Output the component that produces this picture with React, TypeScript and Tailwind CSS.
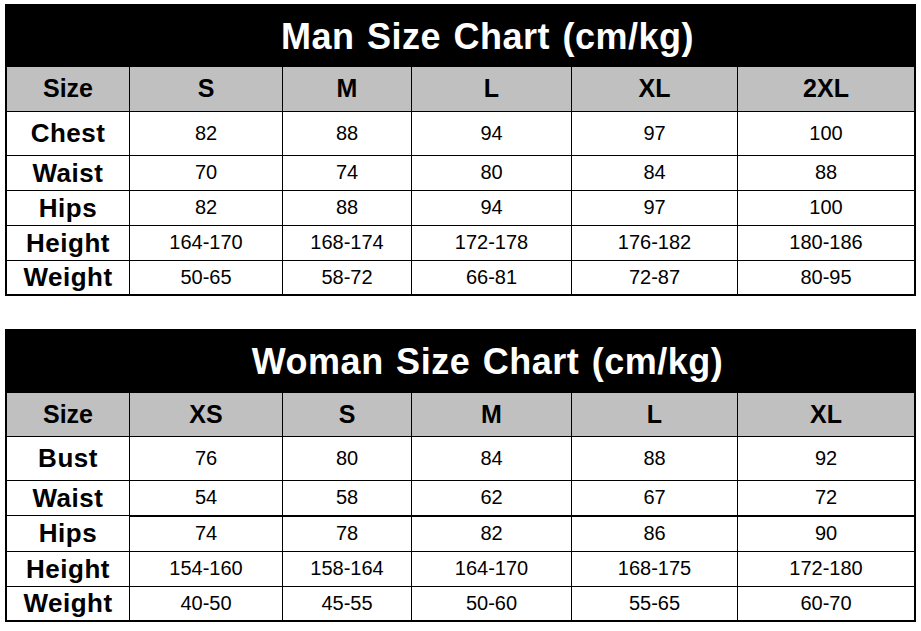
import React from 'react';

type Row = { label: string; values: string[]; h: string; thick?: boolean };

const manRows: Row[] = [
  { label: 'Chest', values: ['82', '88', '94', '97', '100'], h: 'h-[44px]' },
  { label: 'Waist', values: ['70', '74', '80', '84', '88'], h: 'h-[35px]' },
  { label: 'Hips', values: ['82', '88', '94', '97', '100'], h: 'h-[35px]' },
  { label: 'Height', values: ['164-170', '168-174', '172-178', '176-182', '180-186'], h: 'h-[35px]' },
  { label: 'Weight', values: ['50-65', '58-72', '66-81', '72-87', '80-95'], h: 'h-[34px]' },
];

const womanRows: Row[] = [
  { label: 'Bust', values: ['76', '80', '84', '88', '92'], h: 'h-[44px]' },
  { label: 'Waist', values: ['54', '58', '62', '67', '72'], h: 'h-[35px]', thick: true },
  { label: 'Hips', values: ['74', '78', '82', '86', '90'], h: 'h-[36px]' },
  { label: 'Height', values: ['154-160', '158-164', '164-170', '168-175', '172-180'], h: 'h-[35px]' },
  { label: 'Weight', values: ['40-50', '45-55', '50-60', '55-65', '60-70'], h: 'h-[34px]' },
];

const SizeChart = ({
  title,
  sizes,
  rows,
  titleH,
  headH,
}: {
  title: string;
  sizes: string[];
  rows: Row[];
  titleH: string;
  headH: string;
}) => (
  <div className="border-2 border-black">
    {/* Title bar */}
    <div
      className={`${titleH} bg-black text-white font-bold text-[36px] tracking-[0.5px] [word-spacing:2px] flex items-center justify-center pl-[54px]`}
    >
      {title}
    </div>

    <div className="grid grid-cols-[122px_153px_129px_160px_166px_177px]">
      {/* Header row */}
      <div className={`${headH} bg-[#c0c0c0] flex items-center justify-center font-bold text-[25px]`}>Size</div>
      {sizes.map((s) => (
        <div
          key={s}
          className={`${headH} bg-[#c0c0c0] border-l border-black flex items-center justify-center font-bold text-[25px]`}
        >
          {s}
        </div>
      ))}

      {/* Body rows */}
      {rows.map((row, i) => (
        <React.Fragment key={row.label}>
          <div
            className={`${row.h} border-t border-black flex items-center justify-center font-bold text-[26px] tracking-[0.5px]`}
          >
            {row.label}
          </div>
          {row.values.map((v, j) => (
            <div
              key={j}
              className={`${row.h} ${
                rows[i - 1]?.thick ? 'border-t-2' : 'border-t'
              } border-l border-black flex items-center justify-center pb-[2px] text-[20px]`}
            >
              {v}
            </div>
          ))}
        </React.Fragment>
      ))}
    </div>
  </div>
);

export default function App() {
  return (
    <div className="w-[921px] h-[631px] bg-white text-black font-['Liberation_Sans',Arial,sans-serif] px-[5px] pt-[4px] flex flex-col gap-[33px]">
      <SizeChart
        title="Man Size Chart (cm/kg)"
        sizes={['S', 'M', 'L', 'XL', '2XL']}
        rows={manRows}
        titleH="h-[61px]"
        headH="h-[44px]"
      />
      <SizeChart
        title="Woman Size Chart (cm/kg)"
        sizes={['XS', 'S', 'M', 'L', 'XL']}
        rows={womanRows}
        titleH="h-[62px]"
        headH="h-[43px]"
      />
    </div>
  );
}
